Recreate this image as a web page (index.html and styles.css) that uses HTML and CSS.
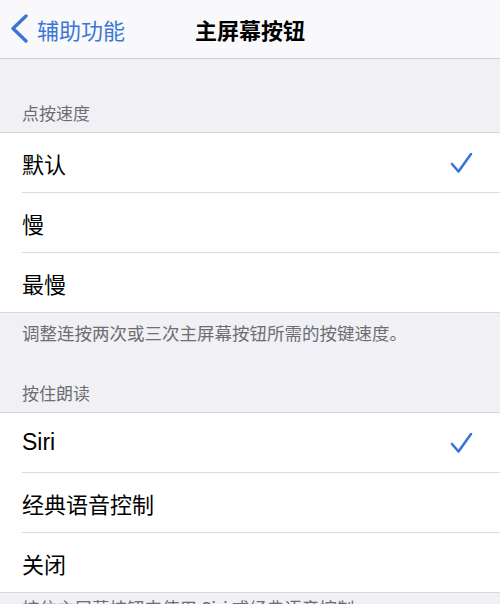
FILE: index.html
```html
<!DOCTYPE html>
<html lang="zh-CN">
<head>
    <meta charset="UTF-8">
    <meta name="viewport" content="width=device-width, initial-scale=1.0">
    <title>主屏幕按钮</title>
    <link rel="stylesheet" href="styles.css">
</head>
<body>
    <!-- Top navigation bar -->
    <header class="nav-bar">
        <a href="#" class="back">
            <svg class="chevron" width="18" height="30" viewBox="0 0 18 30">
                <path d="M15 2 L2 14.5 L15 27" fill="none" stroke="currentColor" stroke-width="3.4" stroke-linecap="round" stroke-linejoin="round"/>
            </svg>
            <span>辅助功能</span>
        </a>
        <h1 class="title">主屏幕按钮</h1>
        <div></div>
    </header>

    <!-- Click speed -->
    <div class="section-header first">点按速度</div>
    <ul class="group">
        <li class="row"><span>默认</span><svg class="check" width="23" height="22" viewBox="0 0 23 22"><path d="M2 12 L8.5 19.5 L21 2" fill="none" stroke="currentColor" stroke-width="2.6" stroke-linecap="round" stroke-linejoin="round"/></svg></li>
        <li class="row"><span>慢</span></li>
        <li class="row"><span>最慢</span></li>
    </ul>
    <div class="section-footer">调整连按两次或三次主屏幕按钮所需的按键速度。</div>

    <!-- Press and hold to speak -->
    <div class="section-header">按住朗读</div>
    <ul class="group">
        <li class="row"><span class="latin">Siri</span><svg class="check" width="23" height="22" viewBox="0 0 23 22"><path d="M2 12 L8.5 19.5 L21 2" fill="none" stroke="currentColor" stroke-width="2.6" stroke-linecap="round" stroke-linejoin="round"/></svg></li>
        <li class="row"><span>经典语音控制</span></li>
        <li class="row"><span>关闭</span></li>
    </ul>
    <div class="section-footer last">按住主屏幕按钮来使用 Siri 或经典语音控制。</div>
</body>
</html>
```

FILE: styles.css
```css
/* Settings page, iOS grouped list look */
body {
    margin: 0;
    background-color: #f1f1f5;
    font-family: "Noto Sans CJK SC", "Noto Sans", sans-serif;
    color: #000;
    overflow: hidden;
}

.nav-bar {
    height: 58px;
    background-color: #f9f9fb;
    border-bottom: 1px solid #cfcfd2;
    display: grid;
    grid-template-columns: 1fr auto 1fr;
    align-items: center;
}

.back {
    display: flex;
    align-items: center;
    gap: 8px;
    padding-left: 11px;
    color: #3b76d6;
    text-decoration: none;
    font-size: 22px;
    line-height: 28px;
}

.chevron {
    display: block;
}

.title {
    margin: 0;
    font-size: 22px;
    font-weight: 700;
    line-height: 28px;
}

.section-header {
    padding: 38px 22px 8px;
    font-size: 17px;
    line-height: 22px;
    color: #6d6d72;
}

.section-header.first {
    padding-top: 43px;
}

.section-footer {
    padding: 9px 22px 0;
    font-size: 17.5px;
    line-height: 22px;
    color: #6d6d72;
}

.section-footer.last {
    padding-top: 4px;
}

.group {
    list-style: none;
    margin: 0;
    padding: 0 0 0 22px;
    background-color: #fff;
    border-top: 1px solid #d8d8dc;
    border-bottom: 1px solid #d8d8dc;
}

.row {
    height: 59px;
    display: flex;
    align-items: center;
    justify-content: space-between;
    padding-right: 27px;
    font-size: 22px;
    border-bottom: 1px solid #dcdce0;
}

.row:last-child {
    border-bottom: none;
}

.latin {
    font-family: "Liberation Sans", Arial, sans-serif;
    font-size: 23px;
}

.check {
    display: block;
    color: #3b76d6;
}
```
